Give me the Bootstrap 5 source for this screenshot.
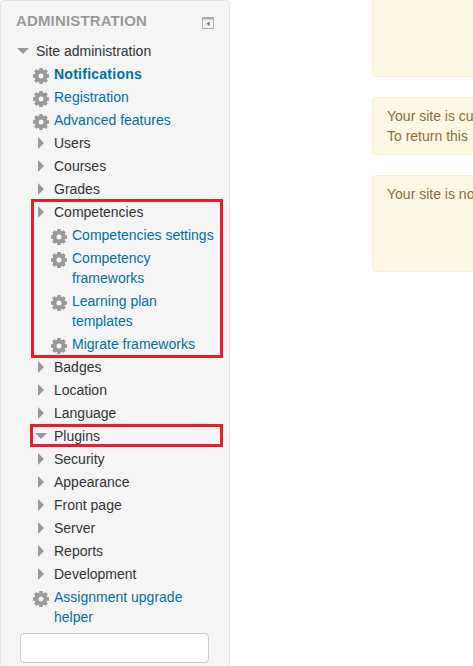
<!DOCTYPE html>
<html lang="en">
<head>
  <meta charset="UTF-8" />
  <meta name="viewport" content="width=device-width, initial-scale=1" />
  <title>Site administration</title>
  <link rel="stylesheet" href="https://cdn.jsdelivr.net/npm/bootstrap@5.3.0/dist/css/bootstrap.min.css" />
  <style>
    body {
      background: #fff;
      font-family: "Liberation Sans", Arial, sans-serif;
      font-size: 14px;
      line-height: 20px;
      color: #333;
      overflow: hidden;
      height: 666px;
    }
    .page-wrap { width: 473px; height: 666px; overflow: hidden; }
    .admin-block {
      width: 230px;
      height: 690px;
      flex-shrink: 0;
      background: #f5f5f5;
      border: 1px solid #e3e3e3;
      border-radius: 4px;
    }
    .block-head { height: 39px; padding: 10px 15px 0 15px; }
    .block-title {
      font-size: 15px;
      line-height: 20px;
      font-weight: 700;
      color: #999;
      margin: 0;
      letter-spacing: .15px;
      text-shadow: 0 1px 0 #fff;
    }
    .dock-ico { margin-top: 6px; }
    .tree-row { display: flex; align-items: flex-start; padding: 1px 0 2px; }
    .tree-row a { color: #0070a8; text-decoration: none; }
    .tree-row a.fw-bold { letter-spacing: .25px; }
    .tree-row span, .tree-row a { display: block; }
    .lvl-0 { padding-left: 15px; }
    .lvl-1 { padding-left: 31px; }
    .lvl-2 { padding-left: 18px; }
    .ico-slot { width: 22px; height: 20px; flex-shrink: 0; display: flex; align-items: center; }
    .ico-slot svg { display: block; }
    .slot-gear { padding: 3px 0 0 1px; }
    .slot-arrow { padding-left: 6px; }
    .slot-down { width: 20px; padding-left: 1px; }
    .slot-plugin { width: 19px; padding-left: 0; }
    .red-group { margin-left: 32px; width: 188px; outline: 3px solid #ed1c24; outline-offset: -1px; }
    .red-list { margin-left: -1px !important; }
    .red-group .lvl-1 { padding-left: 0; }
    .red-single {
      outline: 3px solid #ed1c24;
      outline-offset: -2px;
      margin: 0 0 2px 30px;
      width: 191px;
      padding: 1px 0 0 4px;
    }
    .search-wrap { padding: 4px 0 0 19px; }
    .search-box {
      width: 189px;
      height: 30px;
      border: 1px solid #ccc;
      border-radius: 4px;
      background: #fff;
      display: block;
    }
    .notice-col { margin-left: 142px; flex-shrink: 0; width: 440px; }
    .notice {
      background: #fcf8e3;
      border: 1px solid #fbeed5;
      border-radius: 4px;
      color: #8a6d3b;
      padding: 8px 14px;
      margin: 0 0 20px;
      white-space: nowrap;
    }
    .notice-a { height: 78px; margin-top: -1px; }
    .notice-b { height: 58px; }
    .notice-c { height: 97px; }
  </style>
</head>
<body>
<svg width="0" height="0" class="d-block" aria-hidden="true">
  <defs>
    <symbol id="gear" viewBox="0 0 16 16">
      <g fill="#999">
        <circle cx="8" cy="8" r="4.500" fill="none" stroke="#999" stroke-width="4"/>
        <rect x="6.200" y="0" width="3.600" height="3"/>
        <rect x="6.200" y="0" width="3.600" height="3" transform="rotate(45 8 8)"/>
        <rect x="6.200" y="0" width="3.600" height="3" transform="rotate(90 8 8)"/>
        <rect x="6.200" y="0" width="3.600" height="3" transform="rotate(135 8 8)"/>
        <rect x="6.200" y="0" width="3.600" height="3" transform="rotate(180 8 8)"/>
        <rect x="6.200" y="0" width="3.600" height="3" transform="rotate(225 8 8)"/>
        <rect x="6.200" y="0" width="3.600" height="3" transform="rotate(270 8 8)"/>
        <rect x="6.200" y="0" width="3.600" height="3" transform="rotate(315 8 8)"/>
      </g>
    </symbol>
    <symbol id="arrow-right" viewBox="0 0 6 12"><path fill="#999" d="M0 0l6 6-6 6z"/></symbol>
    <symbol id="arrow-down" viewBox="0 0 12 6"><path fill="#999" d="M0 0h12L6 6z"/></symbol>
  </defs>
</svg>
<div class="page-wrap d-flex align-items-start">
  <div class="admin-block">
    <div class="block-head d-flex justify-content-between align-items-start">
      <h2 class="block-title text-uppercase">Administration</h2>
      <svg class="dock-ico" width="12" height="12" viewBox="0 0 12 12" aria-hidden="true">
        <rect x=".5" y=".5" width="11" height="11" fill="#f5f5f5" stroke="#aaa"/>
        <rect x="0" y="0" width="12" height="2.500" fill="#aaa"/>
        <path d="M7.500 4.500v4.500L4.500 6.750z" fill="#666"/>
      </svg>
    </div>
    <ul class="list-unstyled m-0">
      <li class="tree-row lvl-0"><div class="ico-slot slot-down"><svg width="12" height="6"><use href="#arrow-down"/></svg></div><span>Site administration</span></li>
      <li class="tree-row lvl-1"><div class="ico-slot slot-gear"><svg width="16" height="16"><use href="#gear"/></svg></div><a href="#" class="fw-bold">Notifications</a></li>
      <li class="tree-row lvl-1"><div class="ico-slot slot-gear"><svg width="16" height="16"><use href="#gear"/></svg></div><a href="#">Registration</a></li>
      <li class="tree-row lvl-1"><div class="ico-slot slot-gear"><svg width="16" height="16"><use href="#gear"/></svg></div><a href="#">Advanced features</a></li>
      <li class="tree-row lvl-1"><div class="ico-slot slot-arrow"><svg width="6" height="12"><use href="#arrow-right"/></svg></div><span>Users</span></li>
      <li class="tree-row lvl-1"><div class="ico-slot slot-arrow"><svg width="6" height="12"><use href="#arrow-right"/></svg></div><span>Courses</span></li>
      <li class="tree-row lvl-1"><div class="ico-slot slot-arrow"><svg width="6" height="12"><use href="#arrow-right"/></svg></div><span>Grades</span></li>
      <li class="red-group">
        <ul class="list-unstyled m-0 red-list">
          <li class="tree-row lvl-1"><div class="ico-slot slot-arrow"><svg width="6" height="12"><use href="#arrow-right"/></svg></div><span>Competencies</span></li>
          <li class="tree-row lvl-2"><div class="ico-slot slot-gear"><svg width="16" height="16"><use href="#gear"/></svg></div><a href="#">Competencies settings</a></li>
          <li class="tree-row lvl-2"><div class="ico-slot slot-gear"><svg width="16" height="16"><use href="#gear"/></svg></div><a href="#">Competency<br>frameworks</a></li>
          <li class="tree-row lvl-2"><div class="ico-slot slot-gear"><svg width="16" height="16"><use href="#gear"/></svg></div><a href="#">Learning plan<br>templates</a></li>
          <li class="tree-row lvl-2"><div class="ico-slot slot-gear"><svg width="16" height="16"><use href="#gear"/></svg></div><a href="#">Migrate frameworks</a></li>
        </ul>
      </li>
      <li class="tree-row lvl-1"><div class="ico-slot slot-arrow"><svg width="6" height="12"><use href="#arrow-right"/></svg></div><span>Badges</span></li>
      <li class="tree-row lvl-1"><div class="ico-slot slot-arrow"><svg width="6" height="12"><use href="#arrow-right"/></svg></div><span>Location</span></li>
      <li class="tree-row lvl-1"><div class="ico-slot slot-arrow"><svg width="6" height="12"><use href="#arrow-right"/></svg></div><span>Language</span></li>
      <li class="tree-row red-single"><div class="ico-slot slot-plugin"><svg width="12" height="6"><use href="#arrow-down"/></svg></div><span>Plugins</span></li>
      <li class="tree-row lvl-1"><div class="ico-slot slot-arrow"><svg width="6" height="12"><use href="#arrow-right"/></svg></div><span>Security</span></li>
      <li class="tree-row lvl-1"><div class="ico-slot slot-arrow"><svg width="6" height="12"><use href="#arrow-right"/></svg></div><span>Appearance</span></li>
      <li class="tree-row lvl-1"><div class="ico-slot slot-arrow"><svg width="6" height="12"><use href="#arrow-right"/></svg></div><span>Front page</span></li>
      <li class="tree-row lvl-1"><div class="ico-slot slot-arrow"><svg width="6" height="12"><use href="#arrow-right"/></svg></div><span>Server</span></li>
      <li class="tree-row lvl-1"><div class="ico-slot slot-arrow"><svg width="6" height="12"><use href="#arrow-right"/></svg></div><span>Reports</span></li>
      <li class="tree-row lvl-1"><div class="ico-slot slot-arrow"><svg width="6" height="12"><use href="#arrow-right"/></svg></div><span>Development</span></li>
      <li class="tree-row lvl-1"><div class="ico-slot slot-gear"><svg width="16" height="16"><use href="#gear"/></svg></div><a href="#">Assignment upgrade<br>helper</a></li>
    </ul>
    <div class="search-wrap"><input class="search-box" type="text" aria-label="Search"></div>
  </div>
  <div class="notice-col">
    <div class="notice notice-a"></div>
    <div class="notice notice-b">Your site is currently<br>To return this</div>
    <div class="notice notice-c">Your site is not</div>
  </div>
</div>
</body>
</html>
